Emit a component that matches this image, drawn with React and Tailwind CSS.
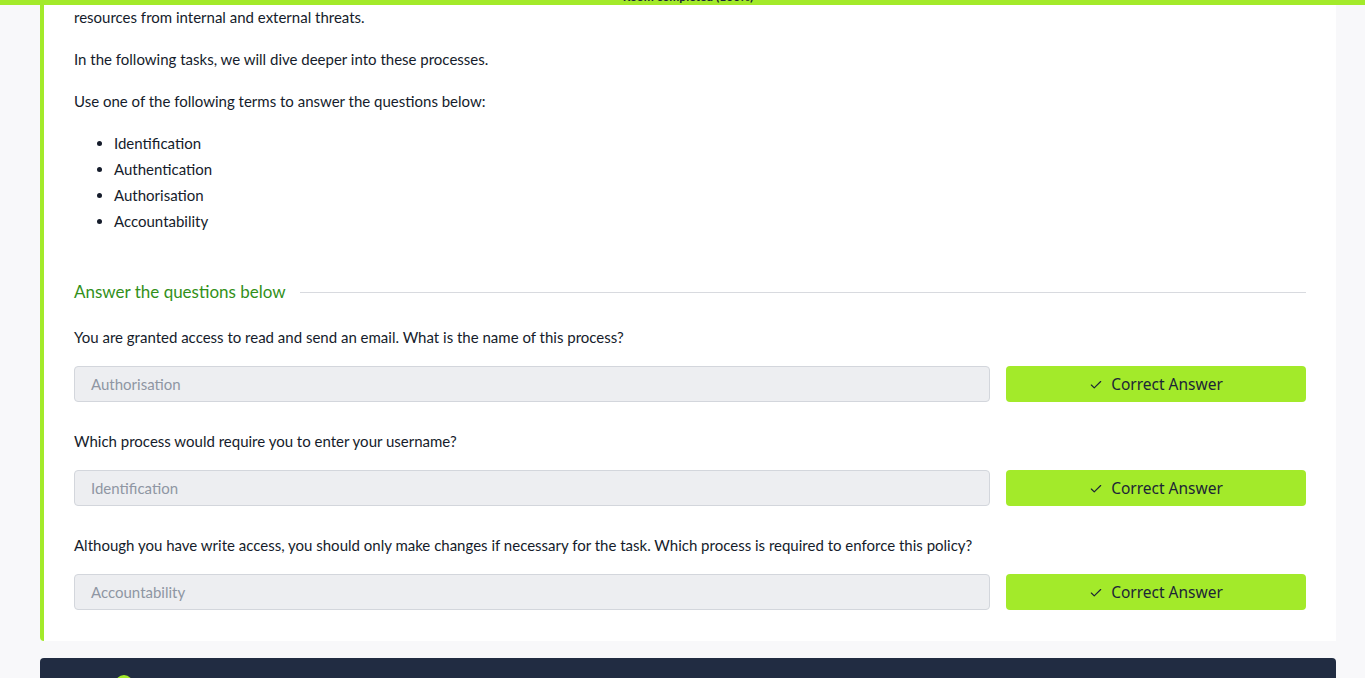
import React from "react";
import { Check } from "lucide-react";

const questions = [
  {
    q: "You are granted access to read and send an email. What is the name of this process?",
    a: "Authorisation",
  },
  { q: "Which process would require you to enter your username?", a: "Identification" },
  {
    q: "Although you have write access, you should only make changes if necessary for the task. Which process is required to enforce this policy?",
    a: "Accountability",
  },
];

const terms = ["Identification", "Authentication", "Authorisation", "Accountability"];

export default function App() {
  return (
    <div
      className="relative min-h-[678px] h-[678px] overflow-hidden bg-[#f8f8fa] text-[#151c2b]"
      style={{ fontFamily: "Lato, 'Open Sans', sans-serif" }}
    >
      {/* progress strip */}
      <div className="absolute top-0 left-0 right-0 h-[5px] bg-[#a3ea2a] z-10">
        <span className="absolute bottom-[2px] left-[688px] -translate-x-1/2 text-[12px] font-bold leading-none text-[#1c2536] whitespace-nowrap">
          Room completed (100%)
        </span>
      </div>

      <div className="pl-[40px] pr-[29px]">
        <div className="bg-white border-l-4 border-[#a3ea2a] rounded-bl-[4px] pl-[30px] pr-[30px] pt-[5px] pb-[31px]">
          <p className="text-[15px] leading-[24px]">resources from internal and external threats.</p>
          <p className="text-[15px] leading-[24px] mt-[18px]">
            In the following tasks, we will dive deeper into these processes.
          </p>
          <p className="text-[15px] leading-[24px] mt-[18px]">
            Use one of the following terms to answer the questions below:
          </p>
          <ul className="list-disc pl-[40px] mt-[17px] text-[15px] leading-[26px]">
            {terms.map((t) => (
              <li key={t}>{t}</li>
            ))}
          </ul>

          <div className="flex items-center gap-[14px] mt-[46px]">
            <span className="text-[17px] leading-[24px] text-[#32901a] whitespace-nowrap">
              Answer the questions below
            </span>
            <div className="flex-1 h-px bg-[#d8dadf]" />
          </div>

          <div className="mt-[21px] flex flex-col gap-[27px]">
            {questions.map((item) => (
              <div key={item.a}>
                <p className="text-[15px] leading-[24px]">{item.q}</p>
                <div className="flex gap-4 mt-[17px]">
                  <div className="flex-1 h-[36px] flex items-center px-4 rounded-[4px] bg-[#edeef1] border border-[#d3d6dc] text-[15px] text-[#8f96a3]">
                    {item.a}
                  </div>
                  <button
                    className="w-[300px] h-[36px] flex items-center justify-center gap-2 rounded-[4px] bg-[#a3ea2a] text-[#1c2536] text-[15.5px] pt-[2px]"
                    style={{ fontFamily: "'Noto Sans', sans-serif" }}
                  >
                    <Check size={14} strokeWidth={2} />
                    Correct Answer
                  </button>
                </div>
              </div>
            ))}
          </div>
        </div>

        <div className="mt-[17px] bg-[#212c42] rounded-t-[4px] h-[80px] px-[34px] pt-[15px] flex items-start gap-3">
          <span className="text-[15px] text-white">Task</span>
          <span className="w-[18px] h-[18px] rounded-full bg-[#a3ea2a] mt-[2px]" />
          <span className="text-[15px] text-white">Identification</span>
        </div>
      </div>
    </div>
  );
}
